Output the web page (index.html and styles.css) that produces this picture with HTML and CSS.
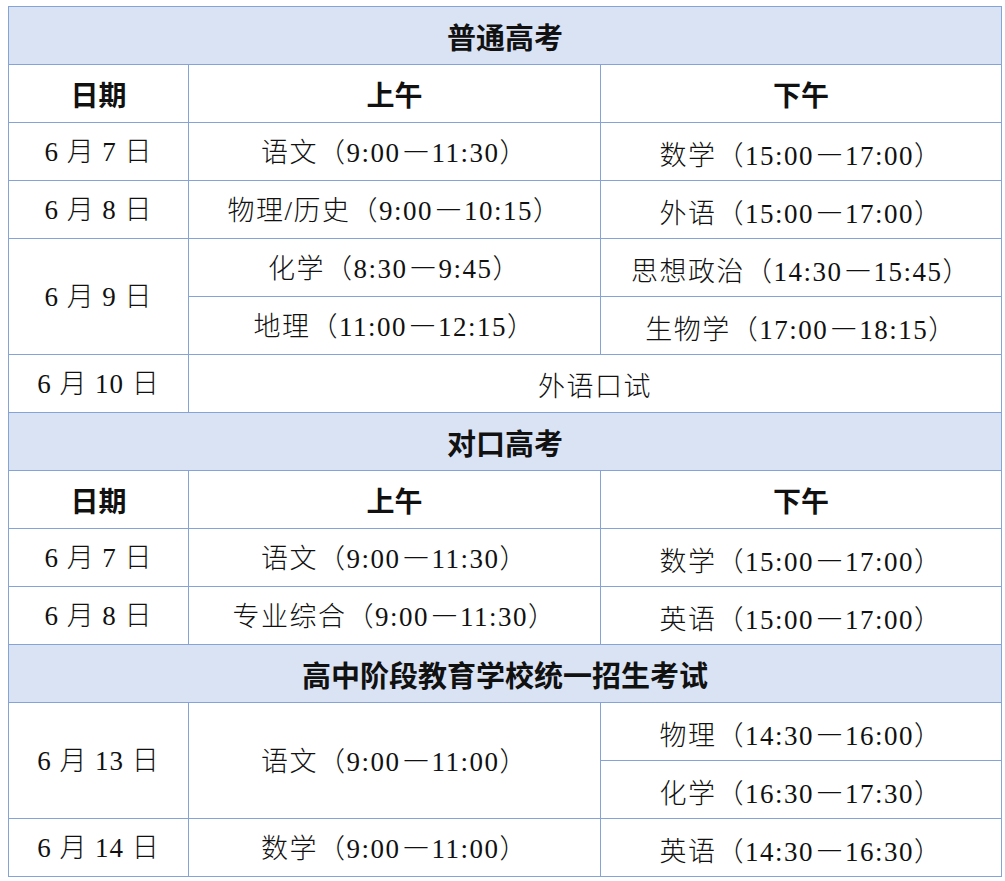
FILE: index.html
```html
<!DOCTYPE html>
<html lang="zh-CN">
<head>
<meta charset="utf-8">
<title>考试时间安排</title>
<link rel="stylesheet" href="styles.css">
</head>
<body>
<table class="schedule">
  <colgroup>
    <col class="c-date">
    <col class="c-am">
    <col class="c-pm">
  </colgroup>
  <tbody>
    <tr class="section"><th colspan="3">普通高考</th></tr>
    <tr class="head"><th>日期</th><th>上午</th><th>下午</th></tr>
    <tr><td class="date">6 月 7 日</td><td>语文（9:00<span class="dash">—</span>11:30）</td><td class="pm">数学（15:00<span class="dash">—</span>17:00）</td></tr>
    <tr><td class="date">6 月 8 日</td><td>物理/历史（9:00<span class="dash">—</span>10:15）</td><td class="pm">外语（15:00<span class="dash">—</span>17:00）</td></tr>
    <tr><td class="date" rowspan="2">6 月 9 日</td><td>化学（8:30<span class="dash">—</span>9:45）</td><td class="pm">思想政治（14:30<span class="dash">—</span>15:45）</td></tr>
    <tr><td>地理（11:00<span class="dash">—</span>12:15）</td><td class="pm">生物学（17:00<span class="dash">—</span>18:15）</td></tr>
    <tr><td class="date">6 月 10 日</td><td colspan="2" class="pm">外语口试</td></tr>

    <tr class="section"><th colspan="3">对口高考</th></tr>
    <tr class="head"><th>日期</th><th>上午</th><th>下午</th></tr>
    <tr><td class="date">6 月 7 日</td><td>语文（9:00<span class="dash">—</span>11:30）</td><td class="pm">数学（15:00<span class="dash">—</span>17:00）</td></tr>
    <tr><td class="date">6 月 8 日</td><td>专业综合（9:00<span class="dash">—</span>11:30）</td><td class="pm">英语（15:00<span class="dash">—</span>17:00）</td></tr>

    <tr class="section"><th colspan="3">高中阶段教育学校统一招生考试</th></tr>
    <tr><td class="date" rowspan="2">6 月 13 日</td><td rowspan="2">语文（9:00<span class="dash">—</span>11:00）</td><td class="pm">物理（14:30<span class="dash">—</span>16:00）</td></tr>
    <tr><td class="pm">化学（16:30<span class="dash">—</span>17:30）</td></tr>
    <tr><td class="date">6 月 14 日</td><td>数学（9:00<span class="dash">—</span>11:00）</td><td class="pm">英语（14:30<span class="dash">—</span>16:30）</td></tr>
  </tbody>
</table>
</body>
</html>
```

FILE: styles.css
```css
html, body {
  margin: 0;
  padding: 0;
  background: #ffffff;
}

body {
  padding: 6px 0 0 8px;
}

.schedule {
  border-collapse: collapse;
  width: 993px;
  table-layout: fixed;
  color: #111111;
  font-family: "Liberation Serif", "Noto Sans CJK SC", serif;
  font-size: 27px;
  font-weight: 300;
}

.c-date { width: 180px; }
.c-am { width: 412px; }
.c-pm { width: 401px; }

.schedule tr {
  height: 58px;
}

.schedule th,
.schedule td {
  border: 1px solid #86a3d8;
  text-align: center;
  vertical-align: middle;
  padding: 0;
}

.schedule td {
  letter-spacing: 1.5px;
  line-height: 30px;
}

.schedule td.pm {
  padding-top: 6px;
}

.schedule td.date {
  letter-spacing: 1px;
}

.dash {
  font-family: "Noto Sans CJK SC", sans-serif;
  font-weight: 700;
  letter-spacing: 0;
  margin: 0 2px;
}

.schedule th {
  font-family: "Noto Sans CJK SC", "Noto Sans", sans-serif;
  font-weight: 700;
  font-size: 28px;
  line-height: 30px;
  color: #111111;
}

.section th {
  background: #dae3f3;
  font-size: 29px;
}
```
